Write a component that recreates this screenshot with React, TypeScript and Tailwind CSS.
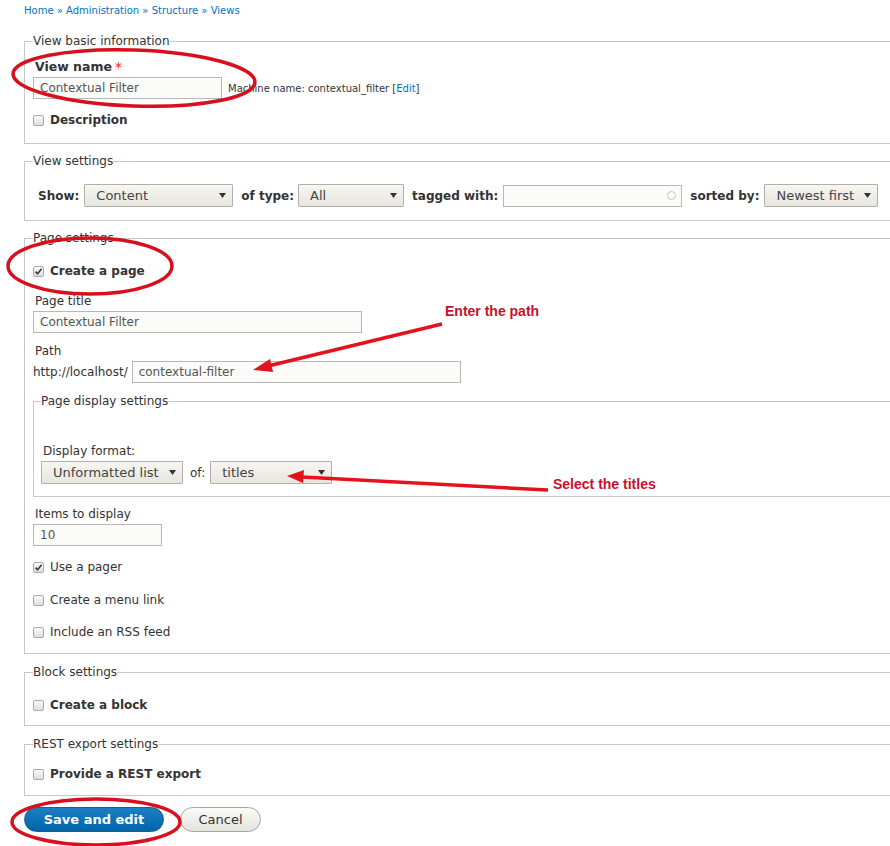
import React from "react";

const font = { fontFamily: '"DejaVu Sans", Verdana, sans-serif' };

function Check({ checked = false }: { checked?: boolean }) {
  return (
    <span className="inline-flex w-[11px] h-[11px] rounded-[2px] border border-[#a9a9a9] bg-gradient-to-b from-[#fafafa] to-[#dedede] items-center justify-center shrink-0">
      {checked && (
        <svg width="9" height="9" viewBox="0 0 9 9">
          <path d="M1.5 4.6 L3.6 6.8 L7.6 1.8" stroke="#3a3a3a" strokeWidth="1.6" fill="none" />
        </svg>
      )}
    </span>
  );
}

function Select({ label, w, pl = "pl-[11px]" }: { label: string; w: string; pl?: string }) {
  return (
    <div
      className={`${w} h-[23px] shrink-0 border border-[#b0afa8] rounded-[1px] bg-gradient-to-b from-[#f7f6f2] to-[#e6e5df] flex items-center justify-between ${pl} pr-[6px] text-[13px] font-normal text-[#444] whitespace-nowrap`}
    >
      <span>{label}</span>
      <svg width="7" height="5" viewBox="0 0 7 5">
        <path d="M0 0 H7 L3.5 5 Z" fill="#333" />
      </svg>
    </div>
  );
}

function Input({ value, w, extra }: { value?: string; w: string; extra?: React.ReactNode }) {
  return (
    <div
      className={`${w} h-[22px] shrink-0 border border-[#b8b8b8] bg-[#fbfbf9] flex items-center justify-between pl-[6px] pr-[5px] text-[12px] font-normal text-[#555]`}
    >
      <span>{value}</span>
      {extra}
    </div>
  );
}

function CheckRow({ label, checked, bold, mt }: { label: string; checked?: boolean; bold?: boolean; mt: string }) {
  return (
    <div className={`${mt} h-[16px] flex items-center gap-[6px] text-[12px] text-[#333] ${bold ? "font-bold" : ""}`}>
      <Check checked={checked} />
      <span>{label}</span>
    </div>
  );
}

export default function App() {
  return (
    <div className="relative w-[890px] h-[846px] overflow-hidden bg-white" style={font}>
      <div className="pl-[24px]">
        <div className="pt-[4px] text-[10px] leading-[14px] text-[#0074bd]">
          Home » Administration » Structure » Views
        </div>

        {/* View basic information */}
        <fieldset className="mt-[15px] w-[900px] border border-[#c8c8c8] px-[8px] pb-[15px]">
          <legend className="text-[12px] leading-[16px] text-[#333]">View basic information</legend>
          <div className="mt-[10px] h-[16px] pl-[2px] flex items-center text-[12.5px] font-bold text-[#333]">
            View name<span className="ml-[3px] text-[#e32700] font-normal text-[14px]">*</span>
          </div>
          <div className="mt-[2px] flex items-center gap-[6px]">
            <Input value="Contextual Filter" w="w-[189px]" />
            <span className="text-[10px] text-[#333]">
              Machine name: contextual_filter [<span className="text-[#0074bd]">Edit</span>]
            </span>
          </div>
          <CheckRow label="Description" bold mt="mt-[13px]" />
        </fieldset>

        {/* View settings */}
        <fieldset className="mt-[9px] w-[900px] border border-[#c8c8c8] px-[8px] pb-[13px]">
          <legend className="text-[12px] leading-[16px] text-[#333]">View settings</legend>
          <div className="mt-[15px] flex items-center pl-[5px] text-[12px] font-bold text-[#333] whitespace-nowrap">
            <span className="mr-[5px]">Show:</span>
            <Select label="Content" w="w-[149px]" />
            <span className="ml-[8px] mr-[4px]">of type:</span>
            <Select label="All" w="w-[106px]" />
            <span className="ml-[8px] mr-[5px]">tagged with:</span>
            <Input
              w="w-[179px]"
              extra={<span className="w-[9px] h-[9px] rounded-full border border-[#c4c4c4]" />}
            />
            <span className="ml-[8px] mr-[5px]">sorted by:</span>
            <Select label="Newest first" w="w-[114px]" />
          </div>
        </fieldset>

        {/* Page settings */}
        <fieldset className="mt-[9px] w-[900px] border border-[#c8c8c8] px-[8px] pb-[13px]">
          <legend className="text-[12px] leading-[16px] text-[#333]">Page settings</legend>
          <CheckRow label="Create a page" checked bold mt="mt-[17px]" />
          <div className="mt-[14px] h-[16px] pl-[2px] text-[12px] text-[#333] flex items-center">Page title</div>
          <div className="mt-[2px]">
            <Input value="Contextual Filter" w="w-[329px]" />
          </div>
          <div className="mt-[10px] h-[16px] pl-[2px] text-[12px] text-[#333] flex items-center">Path</div>
          <div className="mt-[2px] flex items-center gap-[4px] text-[12px] text-[#333]">
            <span>http://localhost/</span>
            <Input value="contextual-filter" w="w-[329px]" />
          </div>

          <fieldset className="mt-[10px] w-[880px] border border-[#c8c8c8] px-[7px] pb-[12px]">
            <legend className="text-[12px] leading-[16px] text-[#333]">Page display settings</legend>
            <div className="mt-[34px] h-[16px] pl-[2px] text-[12px] text-[#333] flex items-center">
              Display format:
            </div>
            <div className="mt-[2px] flex items-center text-[12px] text-[#333]">
              <Select label="Unformatted list" w="w-[142px]" />
              <span className="ml-[7px] mr-[5px]">of:</span>
              <Select label="titles" w="w-[122px]" />
            </div>
          </fieldset>

          <div className="mt-[9px] h-[16px] pl-[2px] text-[12px] text-[#333] flex items-center">Items to display</div>
          <div className="mt-[2px]">
            <Input value="10" w="w-[129px]" />
          </div>
          <CheckRow label="Use a pager" checked mt="mt-[13px]" />
          <CheckRow label="Create a menu link" mt="mt-[17px]" />
          <CheckRow label="Include an RSS feed" mt="mt-[16px]" />
        </fieldset>

        {/* Block settings */}
        <fieldset className="mt-[10px] w-[900px] border border-[#c8c8c8] px-[8px] pb-[12px]">
          <legend className="text-[12px] leading-[16px] text-[#333]">Block settings</legend>
          <CheckRow label="Create a block" bold mt="mt-[17px]" />
        </fieldset>

        {/* REST export settings */}
        <fieldset className="mt-[10px] w-[900px] border border-[#c8c8c8] px-[8px] pb-[13px]">
          <legend className="text-[12px] leading-[16px] text-[#333]">REST export settings</legend>
          <CheckRow label="Provide a REST export" bold mt="mt-[14px]" />
        </fieldset>

        <div className="mt-[11px] flex items-center gap-[16px]">
          <button className="w-[140px] h-[25px] rounded-full bg-gradient-to-b from-[#1a7fc4] to-[#0064a8] border border-[#1e5c90] text-white font-bold text-[13px]">
            Save and edit
          </button>
          <button className="w-[81px] h-[25px] rounded-full bg-gradient-to-b from-[#fbfbf8] to-[#e4e3dd] border border-[#a6a6a6] text-[#333] text-[13px]">
            Cancel
          </button>
        </div>
      </div>

      {/* annotations */}
      <svg className="absolute left-0 top-0 pointer-events-none" width="890" height="846" viewBox="0 0 890 846">
        <g fill="none" stroke="#d8101e" strokeWidth="3.5">
          <ellipse cx="134" cy="78" rx="121" ry="28" transform="rotate(2 134 78)" />
          <ellipse cx="90" cy="266" rx="82" ry="28" />
          <ellipse cx="96" cy="822" rx="84" ry="23" />
        </g>
        <g stroke="#e3121c" strokeWidth="3.5" fill="#e3121c">
          <line x1="442" y1="324" x2="268" y2="366" />
          <polygon points="253,370 270,359 273,372" stroke="none" />
          <line x1="548" y1="490" x2="302" y2="477" />
          <polygon points="287,476 304,470 303,483" stroke="none" />
        </g>
      </svg>
      <div
        className="absolute left-[445px] top-[301px] text-[14px] font-bold text-[#c8102e]"
        style={{ fontFamily: '"Liberation Sans", Arial, sans-serif' }}
      >
        Enter the path
      </div>
      <div
        className="absolute left-[553px] top-[474px] text-[14px] font-bold text-[#c8102e]"
        style={{ fontFamily: '"Liberation Sans", Arial, sans-serif' }}
      >
        Select the titles
      </div>
    </div>
  );
}
